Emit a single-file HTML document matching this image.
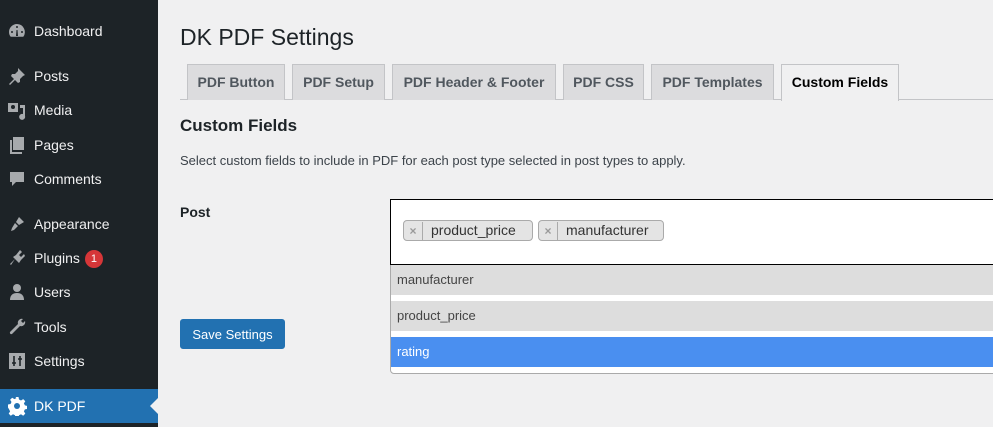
<!DOCTYPE html>
<html><head><meta charset="utf-8"><style>
*{box-sizing:border-box;margin:0;padding:0}
body{width:993px;height:427px;overflow:hidden;background:#f0f0f1;font-family:"Liberation Sans",Arial,sans-serif;color:#1d2327;position:relative}
#side{position:absolute;left:0;top:0;width:158px;height:427px;background:#1d2327}
.mi{position:absolute;left:0;width:158px;height:34px;color:#f0f0f1;font-size:14px;line-height:34px;padding-left:34px}
.ic{position:absolute;left:7px;top:7px;width:20px;height:20px}
.badge{display:inline-block;background:#d63638;color:#fff;border-radius:9px;width:18px;height:18px;line-height:18px;text-align:center;font-size:11px;margin-left:5px;vertical-align:1px}
.cur{background:#2271b1;color:#fff}
.cur:after{content:"";position:absolute;right:0;top:9px;border:8px solid transparent;border-right-color:#f0f0f1}
h1{position:absolute;left:180px;top:24px;font-size:23px;font-weight:400}
.tab{position:absolute;top:64px;height:36px;background:#dcdcde;border:1px solid #c3c4c7;border-bottom:none;font-weight:bold;font-size:14px;color:#50575e;text-align:center;line-height:34px}
.tab.a{background:#f0f0f1;color:#000;height:37px}
#line{position:absolute;left:180px;right:0;top:99px;border-top:1px solid #c3c4c7}
h2{position:absolute;left:180px;top:116px;font-size:17px;font-weight:bold}
.desc{position:absolute;left:180px;top:153px;font-size:13px;color:#3c434a}
.lbl{position:absolute;left:180px;top:204px;font-size:14px;font-weight:bold}
.btn{position:absolute;left:180px;top:319px;width:105px;height:30px;background:#2271b1;color:#fff;border-radius:3px;font-size:13px;line-height:30px;text-align:center;border:1px solid #2271b1}
#dd{position:absolute;left:390px;top:199px;width:610px;height:175px;background:#fff;border:1px solid #aaa;border-radius:0 0 4px 4px}
#inp{position:absolute;left:-1px;top:-1px;right:0;height:66px;border:1px solid #000;background:#fff}
.tag{position:absolute;top:20px;height:21px;border:1px solid #aaa;border-radius:4px;background:#e4e4e4;font-size:14px;line-height:19px;color:#333}
.tag .x{display:inline-block;width:19px;text-align:center;color:#999;font-weight:bold;font-size:12px;border-right:1px solid #aaa}
.tag span.t{padding:0 8px 0 8px}
.opt{position:absolute;left:0;right:0;height:30px;background:#ddd;font-size:13px;line-height:30px;padding-left:6px;color:#444}
</style></head><body>
<div id="side">
<div class="mi" style="top:14px"><svg class="ic" viewBox="0 0 20 20"><path fill="#a7aaad" d="M10 3a8 8 0 0 0-8 8c0 2 .6 3.5 1.7 4.7h12.6A8 8 0 0 0 10 3zm0 2a1 1 0 1 1 0 2 1 1 0 0 1 0-2zM5 10a1 1 0 1 1 0 2 1 1 0 0 1 0-2zm10 0a1 1 0 1 1 0 2 1 1 0 0 1 0-2zm-4 5H9l.5-6h1z"/></svg>Dashboard</div>
<div class="mi" style="top:59px"><svg class="ic" viewBox="0 0 20 20"><path fill="#a7aaad" d="M11 2l7 7-2 1-3 3 0 3-2 1-3-3-5 5-1-1 5-5-3-3 1-2 3 0 3-3z"/></svg>Posts</div>
<div class="mi" style="top:93px"><svg class="ic" viewBox="0 0 20 20"><path fill="#a7aaad" d="M1 3h10v9H1zM13 5h5v11a3 3 0 1 1-2-2V8h-3z"/><circle cx="6" cy="7" r="2" fill="#1d2327"/></svg>Media</div>
<div class="mi" style="top:128px"><svg class="ic" viewBox="0 0 20 20"><path fill="#a7aaad" d="M6 2h11v13H6zM3 5h2v12h10v2H3z"/></svg>Pages</div>
<div class="mi" style="top:162px"><svg class="ic" viewBox="0 0 20 20"><path fill="#a7aaad" d="M3 3h14v10H9l-4 4v-4H3z"/></svg>Comments</div>
<div class="mi" style="top:207px"><svg class="ic" viewBox="0 0 20 20"><path fill="#a7aaad" d="M12 3l5 5-5 3-3-3zM8 9l3 3-4 4-3 1 1-3z"/></svg>Appearance</div>
<div class="mi" style="top:241px"><svg class="ic" viewBox="0 0 20 20"><path fill="#a7aaad" d="M13 2l2 2-3 3 2 2 3-3 1 2-4 4-2 3-4-4-4 6-1-1 5-5-2-2 3-2z"/></svg>Plugins<span class="badge">1</span></div>
<div class="mi" style="top:275px"><svg class="ic" viewBox="0 0 20 20"><circle cx="10" cy="6" r="4" fill="#a7aaad"/><path fill="#a7aaad" d="M3 18c0-5 3-7 7-7s7 2 7 7z"/></svg>Users</div>
<div class="mi" style="top:310px"><svg class="ic" viewBox="0 0 20 20"><path fill="#a7aaad" d="M16 2a4 4 0 0 0-5 5l-8 8a1.5 1.5 0 0 0 2 2l8-8a4 4 0 0 0 5-5l-2 2-2-2z"/></svg>Tools</div>
<div class="mi" style="top:344px"><svg class="ic" viewBox="0 0 20 20"><path fill="#a7aaad" d="M2 2h16v16H2z"/><path stroke="#1d2327" stroke-width="1.6" d="M7 5v10M13 5v10M5 12h4M11 8h4"/></svg>Settings</div>
<div class="mi cur" style="top:389px"><svg class="ic" viewBox="0 0 20 20"><path fill="#fff" d="M8.5 1h3l.5 2.5 2 1 2.2-1.4 2.1 2.1-1.4 2.2 1 2 2.5.5v3l-2.5.5-1 2 1.4 2.2-2.1 2.1-2.2-1.4-2 1-.5 2.5h-3l-.5-2.5-2-1-2.2 1.4-2.1-2.1 1.4-2.2-1-2L1 11.5v-3l2.5-.5 1-2-1.4-2.2 2.1-2.1 2.2 1.4 2-1z"/><circle cx="10" cy="10" r="3" fill="#2271b1"/></svg>DK PDF</div>
</div>
<h1>DK PDF Settings</h1>
<div id="line"></div>
<div class="tab" style="left:187px;width:98px">PDF Button</div>
<div class="tab" style="left:292px;width:93px">PDF Setup</div>
<div class="tab" style="left:392px;width:164px">PDF Header &amp; Footer</div>
<div class="tab" style="left:563px;width:81px">PDF CSS</div>
<div class="tab" style="left:651px;width:123px">PDF Templates</div>
<div class="tab a" style="left:781px;width:118px">Custom Fields</div>
<h2>Custom Fields</h2>
<div class="desc">Select custom fields to include in PDF for each post type selected in post types to apply.</div>
<div class="lbl">Post</div>
<div class="btn">Save Settings</div>
<div id="dd">
<div id="inp">
<div class="tag" style="left:12px;width:130px"><span class="x">×</span><span class="t">product_price</span></div>
<div class="tag" style="left:147px;width:126px"><span class="x">×</span><span class="t">manufacturer</span></div>
</div>
<div class="opt" style="top:65px">manufacturer</div>
<div class="opt" style="top:101px">product_price</div>
<div class="opt" style="top:137px;background:#4a8ff0;color:#fff">rating</div>
</div>
</body></html>
